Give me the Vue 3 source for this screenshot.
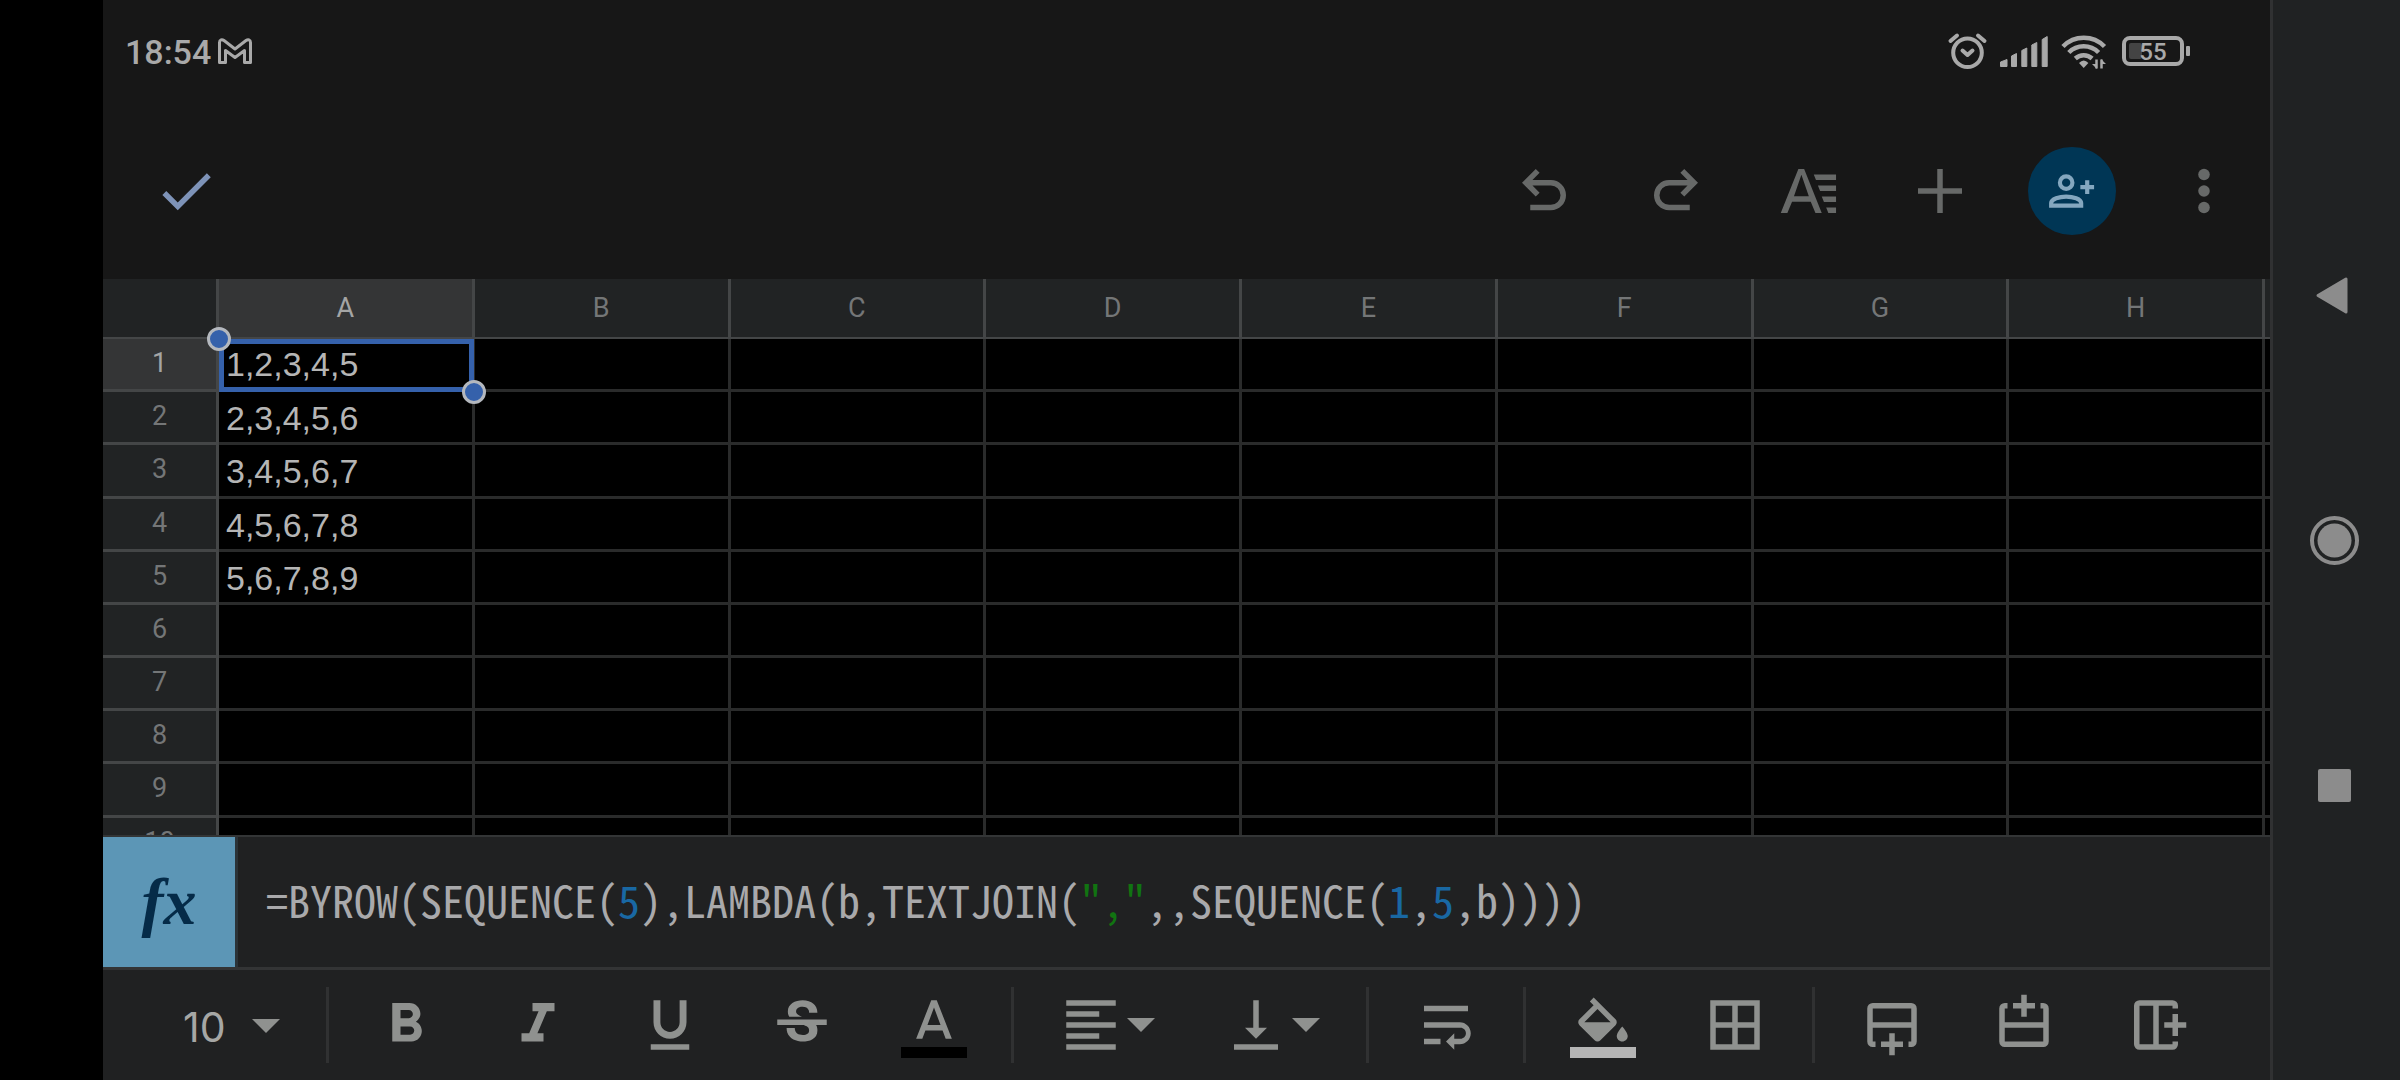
<script setup>
import { ref } from 'vue'

const columns = ['A', 'B', 'C', 'D', 'E', 'F', 'G', 'H']
const values = ['1,2,3,4,5', '2,3,4,5,6', '3,4,5,6,7', '4,5,6,7,8', '5,6,7,8,9']
const rows = Array.from({ length: 10 }, (_, i) => ({ number: i + 1, value: values[i] || '' }))

const fontSize = ref('10')

const formula = [
  { text: '=BYROW(SEQUENCE(' },
  { text: '5', kind: 'number' },
  { text: '),LAMBDA(b,TEXTJOIN(' },
  { text: '","', kind: 'string' },
  { text: ',,SEQUENCE(' },
  { text: '1', kind: 'number' },
  { text: ',' },
  { text: '5', kind: 'number' },
  { text: ',b))))' }
]

const insertPath =
  'M5 4h14a2 2 0 0 1 2 2v12a2 2 0 0 1-2 2h-1v-2h1v-5H5v5h1v2H5a2 2 0 0 1-2-2V6a2 2 0 0 1 2-2zM5 6v5h14V6zM11 15h2v3h3v2h-3v3h-2v-3H8v-2h3z'

const actions = [
  { label: 'Undo', d: 'M7 19v-2h7.5a3.5 3.5 0 0 0 0-7H7.8l2.6 2.6L9 14 4 9l5-5 1.4 1.4L7.8 8h6.7a5.5 5.5 0 0 1 0 11z' },
  { label: 'Redo', d: 'M17 19v-2H9.5a3.5 3.5 0 0 1 0-7h6.7l-2.6 2.6L15 14l5-5-5-5-1.4 1.4L16.2 8H9.5a5.5 5.5 0 0 0 0 11z' },
  { label: 'Format', d: 'M8.5 4h2.1L17 20h-2.3l-1.7-4.1H6.2L4.5 20H2.100zM9.600 6.100 6.900 13.900h5.400zM14.100 6h8.100v2h-7.300zM15.600 10h6.600v2h-5.800zM17 14h5.200v2h-4.400zM18.600 18h3.600v2h-2.800z' },
  { label: 'Insert', d: 'M4 11h7V4h2v7h7v2h-7v7h-2v-7H4z' }
]

const textTools = [
  { label: 'Bold', d: 'M15.6 10.79c.97-.67 1.65-1.77 1.65-2.79 0-2.26-1.75-4-4-4H7v14h7.04c2.09 0 3.71-1.7 3.71-3.79 0-1.52-.86-2.82-2.15-3.42zM10 6.500h3c.83 0 1.500.67 1.500 1.500s-.67 1.500-1.500 1.500h-3v-3zm3.500 9H10v-3h3.500c.83 0 1.500.67 1.500 1.500s-.67 1.500-1.500 1.500z' },
  { label: 'Italic', d: 'M10 4v3h2.210l-3.420 8H6v3h8v-3h-2.210l3.420-8H18V4z' },
  { label: 'Underline', d: 'M12 17c3.310 0 6-2.690 6-6V3h-2.500v8c0 1.930-1.570 3.500-3.500 3.500S8.500 12.930 8.500 11V3H6v8c0 3.310 2.690 6 6 6zm-7 2v2h14v-2H5z' },
  { label: 'Strikethrough', d: 'M6.85 7.08C6.85 4.37 9.45 3 12.24 3c1.64 0 3 .49 3.900 1.280.77.65 1.460 1.730 1.460 3.240h-3.010c0-.31-.05-.59-.15-.85-.29-.86-1.200-1.280-2.250-1.280-1.860 0-2.340 1.020-2.340 1.700 0 .48.25.88.74 1.210.38.25.77.48 1.410.7H7.390c-.21-.34-.54-.89-.54-1.920zM21 12v-2H3v2h9.620c1.150.45 1.960.75 1.960 1.970 0 1-.81 1.670-2.280 1.670-1.540 0-2.930-.54-2.930-2.510H6.400c0 .55.08 1.130.24 1.580.81 2.290 3.290 3.300 5.670 3.300 2.270 0 5.300-.89 5.300-4.050 0-.3-.01-1.160-.48-1.940H21V12z' },
  { label: 'Text colour', d: 'M11 3L5.500 17h2.250l1.120-3h6.250l1.120 3h2.250L13 3h-2zm-1.380 9L12 5.670 14.380 12H9.620z', bar: '#000000' }
]

const alignTools = [
  { label: 'Horizontal alignment', d: 'M15 15H3v2h12v-2zm0-8H3v2h12V7zM3 13h18v-2H3v2zm0 8h18v-2H3v2zM3 3v2h18V3H3z' },
  { label: 'Vertical alignment', d: 'M16 13h-3V3h-2v10H8l4 4 4-4zM4 19v2h16v-2H4z' }
]

const wrapTools = [
  { label: 'Wrap text', d: 'M4 19h6v-2H4v2zM20 5H4v2h16V5zm-3 6H4v2h13.250c1.100 0 2 .9 2 2s-.9 2-2 2H15v-2l-3 3 3 3v-2h2c2.210 0 4-1.790 4-4s-1.790-4-4-4z' }
]

const cellTools = [
  { label: 'Fill colour', d: 'M16.560 9.940L8.620 2 7.210 3.410l1.380 1.380-5.150 5.150c-.59.59-.59 1.540 0 2.120l5.500 5.500c.29.29.68.44 1.060.44s.77-.15 1.060-.44l5.500-5.500c.59-.58.59-1.530 0-2.120zM5.210 11L10 6.210 14.790 11H5.210zM19 12.500s-2 2.170-2 3.500c0 1.100.9 2 2 2s2-.9 2-2c0-1.330-2-3.500-2-3.500z', bar: '#b5b5b5' },
  { label: 'Borders', d: 'M3 3v18h18V3H3zm8 16H5v-6h6v6zm0-8H5V5h6v6zm8 8h-6v-6h6v6zm0-8h-6V5h6v6z' }
]

const insertTools = [
  { label: 'Insert row below', d: insertPath },
  { label: 'Insert row above', d: insertPath, transform: 'matrix(1 0 0 -1 0 24)' },
  { label: 'Insert column right', d: insertPath, transform: 'matrix(0 1 1 0 0 0)' }
]

const toolGroups = [
  { name: 'text', tools: textTools },
  { name: 'align', tools: alignTools, menu: true },
  { name: 'wrap', tools: wrapTools },
  { name: 'cell', tools: cellTools },
  { name: 'insert', tools: insertTools }
]
</script>

<template>
  <div class="screen">
    <div class="app">
      <header class="status">
        <div class="status-left">
          <span class="clock">18:54</span>
          <svg width="34" height="28" viewBox="0 0 34 28" fill="none" stroke="#a9a9a9" stroke-width="3" stroke-linejoin="round">
            <path d="M1.500 4.500C1.500 1.500 4 1 6 2.500L17 11 28 2.500c2-1.500 4.500-1 4.500 2V24.500H26.500V12.500L17 19.500 7.500 12.500V24.500H1.500z" />
          </svg>
        </div>
        <div class="status-right">
          <svg width="41" height="40" viewBox="0 0 41 40" fill="none" stroke="#a9a9a9" stroke-width="4" stroke-linecap="round" stroke-linejoin="round">
            <path d="M3.500 9 10 3.500M31 3.500 37.500 9" />
            <circle cx="20.500" cy="20.700" r="14.300" />
            <path d="M15.500 18.500l5 4.500 5-4.500" />
          </svg>
          <svg width="49" height="40" viewBox="0 0 49 40" fill="#a9a9a9" stroke="#a9a9a9" stroke-width="1" stroke-linejoin="round">
            <path d="M.5 30 7 27.500v7H.5zM11.500 24l5-2.500v13h-5zM21.800 18.500l5-2.500v18.500h-5zM31.800 13l5-2.500v24h-5zM42.200 7.500l5-3v30h-5z" />
          </svg>
          <svg width="49" height="40" viewBox="0 0 49 40" fill="none" stroke="#a9a9a9" stroke-width="4.500">
            <path d="M2 14.500a29 29 0 0 1 41.500 0M7.800 20.500a21 21 0 0 1 29.800 0M14.300 26.500a12.500 12.500 0 0 1 16.800 0" />
            <path d="M18 31q4.700-5 9.400 0L22.700 36z" fill="#a9a9a9" stroke="none" />
            <path d="M35.500 27.500v9M40.500 27.500v9" stroke-width="2.500" />
            <path d="M36 37l-5-5h5zM40 27l5 5h-5z" fill="#a9a9a9" stroke="none" />
          </svg>
          <svg width="68" height="40" viewBox="0 0 68 40">
            <rect x="2" y="6" width="58" height="26" rx="6" fill="none" stroke="#a9a9a9" stroke-width="4" />
            <rect x="7" y="11" width="13" height="16" rx="2" fill="#444444" />
            <rect x="64" y="14" width="4" height="10" rx="1" fill="#a9a9a9" />
            <text x="31" y="28" text-anchor="middle" class="battery-level">55</text>
          </svg>
        </div>
      </header>

      <nav class="actions">
        <button class="action confirm" aria-label="Done">
          <svg class="icon" viewBox="0 0 24 24"><path d="M9 16.170L4.830 12l-1.420 1.410L9 19 21 7l-1.410-1.410z" /></svg>
        </button>
        <span class="spacer"></span>
        <button v-for="action in actions" :key="action.label" class="action" :aria-label="action.label">
          <svg class="icon" viewBox="0 0 24 24"><path :d="action.d" fill-rule="evenodd" /></svg>
        </button>
        <button class="action" aria-label="Share">
          <span class="share">
            <svg width="50" height="50" viewBox="0 0 24 24" fill="none" stroke="#84a7bf" stroke-width="2">
              <circle cx="9.200" cy="8" r="3" />
              <path d="M2 19v-1.200C2 15.800 6 14.700 9.200 14.700s7.200 1.100 7.200 3.100V19zM19.300 6.800v6.600M16 10.100h6.600" />
            </svg>
          </span>
        </button>
        <button class="action" aria-label="More options">
          <svg class="icon" viewBox="0 0 24 24">
            <circle cx="12" cy="6" r="2.100" /><circle cx="12" cy="12" r="2.100" /><circle cx="12" cy="18" r="2.100" />
          </svg>
        </button>
      </nav>

      <main class="sheet">
        <table>
          <colgroup>
            <col class="col-head" />
            <col v-for="c in columns" :key="c" />
            <col class="col-edge" />
          </colgroup>
          <thead>
            <tr>
              <th></th>
              <th v-for="c in columns" :key="c" scope="col" :class="{ active: c === 'A' }">{{ c }}</th>
              <th></th>
            </tr>
          </thead>
          <tbody>
            <tr v-for="row in rows" :key="row.number">
              <th scope="row" :class="{ active: row.number === 1 }">{{ row.number }}</th>
              <td v-for="c in columns" :key="c" :class="{ selected: c === 'A' && row.number === 1 }">
                <template v-if="c === 'A'">{{ row.value }}</template>
                <span v-if="c === 'A' && row.number === 1" class="selection">
                  <i class="handle start"></i><i class="handle end"></i>
                </span>
              </td>
              <td></td>
            </tr>
          </tbody>
        </table>
      </main>

      <section class="formula-bar">
        <button class="fx" aria-label="Functions">fx</button>
        <div class="formula" role="textbox" aria-label="Formula" contenteditable="true" spellcheck="false"><span v-for="(part, i) in formula" :key="i" :class="part.kind">{{ part.text }}</span></div>
      </section>

      <footer class="tools">
        <label class="size">
          <select v-model="fontSize" aria-label="Font size">
            <option v-for="s in ['8', '9', '10', '11', '12', '14', '18']" :key="s">{{ s }}</option>
          </select>
          <svg class="arrow" viewBox="0 0 28 14"><path d="M0 0h28L14 14z" /></svg>
        </label>
        <div v-for="group in toolGroups" :key="group.name" class="group">
          <button v-for="tool in group.tools" :key="tool.label" class="tool" :class="{ menu: group.menu }" :aria-label="tool.label">
            <svg class="icon" viewBox="0 0 24 24">
              <path :d="tool.d" :transform="tool.transform" fill-rule="evenodd" />
              <rect v-if="tool.bar" y="20" width="24" height="4" :fill="tool.bar" />
            </svg>
            <svg v-if="group.menu" class="arrow" viewBox="0 0 28 14"><path d="M0 0h28L14 14z" /></svg>
          </button>
        </div>
      </footer>
    </div>

    <aside class="system-nav">
      <button aria-label="Back">
        <svg width="49" height="49" viewBox="0 0 49 49"><path d="M8 24.500 36 8v33z" stroke="#8c8c8c" stroke-width="3" stroke-linejoin="round" /></svg>
      </button>
      <button aria-label="Home">
        <svg width="49" height="49" viewBox="0 0 49 49">
          <circle cx="24.500" cy="24.500" r="17" />
          <circle cx="24.500" cy="24.500" r="22.500" fill="none" stroke="#8c8c8c" stroke-width="4" />
        </svg>
      </button>
      <button aria-label="Recent apps">
        <svg width="49" height="49" viewBox="0 0 49 49"><rect x="8" y="8" width="33" height="33" rx="2" /></svg>
      </button>
    </aside>
  </div>
</template>

<style>
body {
  background: #000000;
}
</style>

<style scoped>
.screen {
  display: flex;
  height: 100vh;
  padding-left: 103px;
  box-sizing: border-box;
  background: #000000;
  font-family: Roboto, "Liberation Sans", sans-serif;
}

button {
  margin: 0;
  padding: 0;
  border: 0;
  background: none;
  cursor: pointer;
}

svg {
  display: block;
  flex: none;
}

.app {
  display: flex;
  flex: 1;
  min-width: 0;
  flex-direction: column;
  border-right: 3px solid #303132;
  background: #171717;
}

.status {
  display: flex;
  flex: none;
  height: 103px;
  align-items: center;
  justify-content: space-between;
  padding: 0 80px 0 22px;
}

.status-left {
  display: flex;
  align-items: center;
  gap: 7px;
}

.status-right {
  display: flex;
  gap: 12px;
}

.clock {
  color: #a9a9a9;
  font-size: 34px;
  font-weight: 500;
  line-height: 40px;
}

.battery-level {
  fill: #a9a9a9;
  font-family: Roboto, sans-serif;
  font-size: 24px;
  font-weight: 500;
}

.actions {
  display: flex;
  flex: none;
  height: 176px;
  align-items: center;
  padding-left: 17px;
}

.spacer {
  flex: 1;
}

.action {
  display: flex;
  width: 132px;
  height: 88px;
  align-items: center;
  justify-content: center;
  fill: #676968;
}

.confirm {
  fill: #7e93b8;
}

.icon {
  width: 66px;
  height: 66px;
}

.share {
  display: flex;
  width: 88px;
  height: 88px;
  align-items: center;
  justify-content: center;
  border-radius: 50%;
  background: #003655;
}

.sheet {
  flex: 1;
  min-height: 0;
  overflow: hidden;
  background: #000000;
}

table {
  width: 100%;
  table-layout: fixed;
  border-collapse: separate;
  border-spacing: 0;
}

.col-head {
  width: 116px;
}

.col-edge {
  width: 5px;
}

th,
td {
  box-sizing: border-box;
  padding: 0;
  border: solid #2a2b2b;
  border-width: 0 3px 3px 0;
  vertical-align: top;
  white-space: nowrap;
}

th {
  border-color: #444647;
  background: #212324;
  color: #747677;
  font-size: 27px;
  font-weight: 400;
  line-height: 48px;
}

thead th {
  height: 60px;
  border-bottom-width: 2px;
  line-height: 58px;
}

tr > :last-child {
  border-right: 0;
}

th.active {
  background: #343536;
  color: #a4a5a5;
}

tbody tr {
  height: 53px;
}

tbody tr:nth-child(6n + 3) {
  height: 54px;
}

td {
  padding: 3px 0 0 7px;
  color: #b5b5b5;
  font-family: "Liberation Sans", Arial, sans-serif;
  font-size: 34px;
  line-height: 47px;
}

td:last-child {
  padding: 0;
}

.selected {
  position: relative;
  padding-top: 2px;
}

.selection {
  position: absolute;
  inset: 0 -2px -3px 0;
  z-index: 1;
  border: 5px solid #3561ab;
}

.handle {
  position: absolute;
  width: 18px;
  height: 18px;
  border: 3px solid #b4b8be;
  border-radius: 50%;
  background: #3561ab;
}

.start {
  top: -17px;
  left: -17px;
}

.end {
  right: -17px;
  bottom: -17px;
}

.formula-bar {
  display: flex;
  flex: none;
  height: 130px;
  border-top: 2px solid #333536;
  border-bottom: 3px solid #333435;
  background: #202122;
}

.fx {
  width: 135px;
  border-right: 3px solid #2b3338;
  background: #5c96b6;
  color: #052b48;
  font: italic bold 66px/124px "Liberation Serif", "Times New Roman", serif;
}

.formula {
  flex: 1;
  min-width: 0;
  overflow: hidden;
  padding-left: 28px;
  outline: 0;
  color: #a9a9ab;
  font-family: "Noto Sans Mono CJK JP", monospace;
  font-size: 44px;
  line-height: 124px;
  white-space: nowrap;
}

.number {
  color: #1968a3;
}

.string {
  color: #117411;
}

.tools {
  display: flex;
  flex: none;
  height: 110px;
  align-items: center;
  background: #202122;
}

.size {
  position: relative;
  width: 212px;
}

.size select {
  display: block;
  width: 100%;
  height: 76px;
  padding: 4px 0 0 80px;
  border: 0;
  appearance: none;
  outline: 0;
  background: none;
  color: #a6a7a5;
  font-family: Inter, Roboto, sans-serif;
  font-size: 41px;
}

.arrow {
  width: 28px;
  height: 14px;
  fill: #8f918f;
}

.size .arrow {
  position: absolute;
  top: 32px;
  right: 35px;
  pointer-events: none;
}

.group {
  display: flex;
  height: 76px;
  margin-left: 11px;
  padding-left: 11px;
  border-left: 3px solid #303132;
}

.tool {
  display: flex;
  width: 132px;
  align-items: center;
  justify-content: center;
  fill: #8f918f;
}

.tool.menu {
  width: 165px;
  justify-content: flex-start;
  gap: 3px;
  padding-left: 33px;
}

.system-nav {
  display: flex;
  width: 127px;
  flex: none;
  flex-direction: column;
  justify-content: center;
  background: #202223;
}

.system-nav button {
  display: flex;
  height: 245px;
  align-items: center;
  justify-content: center;
  padding-right: 4px;
  fill: #8c8c8c;
}
</style>
